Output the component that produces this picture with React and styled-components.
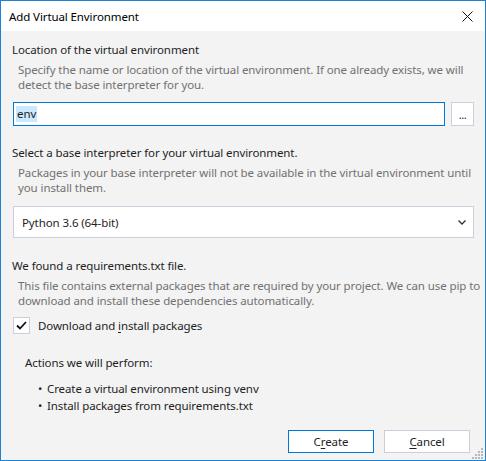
import React from "react"
import styled, { createGlobalStyle } from "styled-components"

const Global = createGlobalStyle`
  html, body {
    margin: 0;
    padding: 0;
    background: #ffffff;
  }
  * {
    box-sizing: border-box;
  }
`

const Window = styled.div`
  position: relative;
  width: 486px;
  height: 461px;
  border: 1px solid #1883d7;
  display: flex;
  flex-direction: column;
  font-family: "Noto Sans", "Open Sans", sans-serif;
  font-size: 11.5px;
  letter-spacing: -0.1px;
  color: #1e1e1e;
  overflow: hidden;
`

const TitleBar = styled.div`
  height: 30px;
  background: #ffffff;
  display: flex;
  align-items: center;
  justify-content: space-between;
  padding: 0 12px 0 8px;
  flex-shrink: 0;
`

const Title = styled.span`
  color: #000;
`

const Body = styled.div`
  flex: 1;
  background: #f3f3f3;
  display: flex;
  flex-direction: column;
  padding: 11px 11px 7px 11px;
`

const Heading = styled.div`
  line-height: 16px;
  margin-top: ${(p) => p.$top || 0}px;
  color: #1e1e1e;
  white-space: nowrap;
`

const Desc = styled.p`
  margin: 4px 0 0 6px;
  line-height: 15px;
  color: #717171;
  white-space: nowrap;
`

const FieldRow = styled.div`
  display: flex;
  gap: 6px;
  margin-top: ${(p) => p.$top || 0}px;
  margin-left: 1px;
`

const TextBox = styled.div`
  flex: 1;
  height: 24px;
  border: 1px solid #0078d7;
  background: #fff;
  display: flex;
  align-items: center;
  padding-left: 2px;
`

const Selected = styled.span`
  background: #cce8ff;
  color: #1e1e1e;
  padding: 0 1px;
  line-height: 16px;
`

const BrowseButton = styled.div`
  width: 23px;
  height: 24px;
  border: 1px solid #cccedb;
  background: #fff;
  display: flex;
  align-items: center;
  justify-content: center;
  font-size: 11px;
  letter-spacing: -0.5px;
  padding-top: 1px;
`

const Select = styled.div`
  height: 32px;
  margin-top: ${(p) => p.$top || 0}px;
  margin-left: 1px;
  border: 1px solid #cccedb;
  background: #fff;
  display: flex;
  align-items: center;
  justify-content: space-between;
  padding: 0 7px 0 8px;
`

const CheckRow = styled.label`
  display: flex;
  align-items: center;
  gap: 8px;
  margin-top: ${(p) => p.$top || 0}px;
  margin-left: 1px;
`

const CheckBox = styled.span`
  width: 17px;
  height: 17px;
  border: 1px solid #cccedb;
  background: #fff;
  display: flex;
  align-items: center;
  justify-content: center;
`

const Key = styled.span`
  text-decoration: underline;
  text-underline-offset: 2px;
`

const Actions = styled.div`
  margin: ${(p) => p.$top || 0}px 0 0 13px;
  line-height: 16px;
`

const BulletList = styled.ul`
  list-style: none;
  margin: 9px 0 0 26px;
  padding: 0;
  line-height: 17px;
  li {
    display: flex;
    gap: 5px;
  }
  li::before {
    content: "•";
    width: 4px;
  }
`

const Footer = styled.div`
  margin-top: auto;
  display: flex;
  justify-content: flex-end;
  gap: 10px;
  padding-right: 4px;
`

const Button = styled.div`
  width: 86px;
  height: 23px;
  border: 1px solid ${(p) => (p.$primary ? "#0078d7" : "#cccedb")};
  background: #fff;
  display: flex;
  align-items: center;
  justify-content: center;
  color: #1e1e1e;
`

const Grip = styled.svg`
  position: absolute;
  right: 1px;
  bottom: 1px;
`

const CloseIcon = () => (
  <svg width="11" height="11" viewBox="0 0 11 11">
    <path d="M0.5 0.5 L10.5 10.5 M10.5 0.5 L0.5 10.5" stroke="#111" strokeWidth="1" />
  </svg>
)

const Chevron = () => (
  <svg width="8" height="5" viewBox="0 0 8 5">
    <path d="M0.5 0.5 L4 4 L7.5 0.5" stroke="#333" strokeWidth="1.4" fill="none" />
  </svg>
)

const Tick = () => (
  <svg width="11" height="9" viewBox="0 0 11 9">
    <path d="M1 4.5 L4 7.5 L10 1" stroke="#111" strokeWidth="1.8" fill="none" />
  </svg>
)

const App = () => {
  return (
    <>
      <Global />
      <Window>
        <TitleBar>
          <Title>Add Virtual Environment</Title>
          <CloseIcon />
        </TitleBar>
        <Body>
          <Heading>Location of the virtual environment</Heading>
          <Desc>
            Specify the name or location of the virtual environment. If one already exists, we will
            <br />
            detect the base interpreter for you.
          </Desc>
          <FieldRow $top={10}>
            <TextBox>
              <Selected>env</Selected>
            </TextBox>
            <BrowseButton>...</BrowseButton>
          </FieldRow>

          <Heading $top={19}>Select a base interpreter for your virtual environment.</Heading>
          <Desc>
            Packages in your base interpreter will not be available in the virtual environment until
            <br />
            you install them.
          </Desc>
          <Select $top={11}>
            <span>Python 3.6 (64-bit)</span>
            <Chevron />
          </Select>

          <Heading $top={20}>We found a requirements.txt file.</Heading>
          <Desc>
            This file contains external packages that are required by your project. We can use pip to
            <br />
            download and install these dependencies automatically.
          </Desc>
          <CheckRow $top={9}>
            <CheckBox>
              <Tick />
            </CheckBox>
            <span>
              Download and <Key>i</Key>nstall packages
            </span>
          </CheckRow>

          <Actions $top={21}>Actions we will perform:</Actions>
          <BulletList>
            <li>Create a virtual environment using venv</li>
            <li>Install packages from requirements.txt</li>
          </BulletList>

          <Footer>
            <Button $primary>
              <span>
                C<Key>r</Key>eate
              </span>
            </Button>
            <Button>
              <span>
                <Key>C</Key>ancel
              </span>
            </Button>
          </Footer>
        </Body>
        <Grip width="12" height="12" viewBox="0 0 12 12">
          {[
            [9, 1],
            [9, 4],
            [6, 4],
            [9, 7],
            [6, 7],
            [3, 7],
            [9, 10],
            [6, 10],
            [3, 10],
            [0, 10],
          ].map(([x, y]) => (
            <rect key={`${x}-${y}`} x={x} y={y} width="2" height="2" fill="#b8b8b8" />
          ))}
        </Grip>
      </Window>
    </>
  )
}

export default App
